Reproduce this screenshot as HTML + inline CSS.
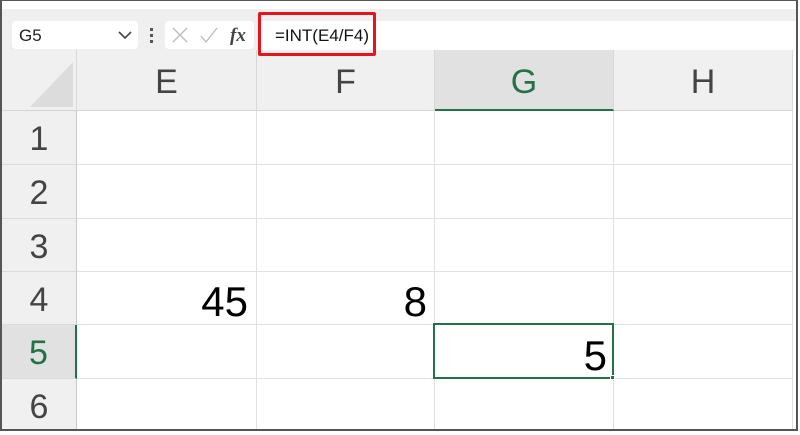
<!DOCTYPE html>
<html><head><style>
*{margin:0;padding:0;box-sizing:border-box}
body{width:800px;height:431px;overflow:hidden;background:#fff;position:relative;font-family:"Liberation Sans",sans-serif}
.a{position:absolute}
.hd{position:absolute;top:50px;height:61px;background:#f0f0f0;border-bottom:1px solid #d4d4d4;border-right:1px solid #d8d8d8;color:#444;font-size:34px;text-align:center;line-height:64px}
.rh{position:absolute;left:2px;width:75px;background:#f0f0f0;border-bottom:1px solid #dcdcdc;border-right:1px solid #c8c8c8;color:#444;font-size:34px;text-align:center;line-height:56px}
.vl{position:absolute;top:111px;width:1px;height:318px;background:#e1e1e1}
.hl{position:absolute;left:77px;width:715px;height:1px;background:#e1e1e1}
.num{position:absolute;font-size:42px;color:#000;text-align:right}
</style></head><body>
<div class="a" style="left:0;top:0;width:800px;height:10px;background:#fff"></div>
<div class="a" style="left:1px;top:9px;width:796px;height:41px;background:#efefef"></div>
<div class="a" style="left:258px;top:21px;width:539px;height:29px;background:#fff"></div>
<div class="a" style="left:12px;top:21px;width:126px;height:28px;background:#fff;border-radius:4px"></div>
<div class="a" style="left:19px;top:26px;font-size:17px;color:#222">G5</div>
<svg class="a" style="left:118px;top:30px" width="14" height="10"><path d="M1 2 L7 8 L13 2" stroke="#444" stroke-width="1.6" fill="none"/></svg>
<div class="a" style="left:150px;top:28px;width:3px;height:3px;background:#555"></div>
<div class="a" style="left:150px;top:34px;width:3px;height:3px;background:#555"></div>
<div class="a" style="left:150px;top:40px;width:3px;height:3px;background:#555"></div>
<div class="a" style="left:165px;top:21px;width:89px;height:28px;background:#fff;border-radius:4px"></div>
<svg class="a" style="left:170px;top:25px" width="80" height="22"><path d="M3 3 L17 17 M17 3 L3 17" stroke="#bbb" stroke-width="1.3"/><path d="M31 11 L36 17 L47 3" stroke="#bbb" stroke-width="1.3" fill="none"/><text x="60" y="16" font-family="Liberation Serif" font-style="italic" font-weight="bold" font-size="19" fill="#444">fx</text></svg>
<div class="a" style="left:275px;top:26px;font-size:17px;color:#111">=INT(E4/F4)</div>
<div class="a" style="left:2px;top:50px;width:75px;height:61px;background:#f0f0f0;border-right:1px solid #d8d8d8;border-bottom:1px solid #d4d4d4"></div>
<svg class="a" style="left:30px;top:62px" width="44" height="46"><path d="M43 0 L43 45 L0 45 Z" fill="#dcdcdc"/></svg>
<div class="hd" style="left:77px;width:180px">E</div>
<div class="hd" style="left:257px;width:178px">F</div>
<div class="hd" style="left:435px;width:179px;background:#e1e1e1;color:#217346;border-bottom:2px solid #217346">G</div>
<div class="hd" style="left:614px;width:179px">H</div>
<div class="rh" style="top:111px;height:54px">1</div>
<div class="rh" style="top:165px;height:54px">2</div>
<div class="rh" style="top:219px;height:53px">3</div>
<div class="rh" style="top:272px;height:53px">4</div>
<div class="rh" style="top:325px;height:54px;background:#e1e1e1;color:#217346;border-right:2px solid #217346">5</div>
<div class="rh" style="top:379px;height:50px;border-bottom:none">6</div>
<div class="vl" style="left:256px"></div>
<div class="vl" style="left:434px"></div>
<div class="vl" style="left:613px"></div>
<div class="vl" style="left:792px"></div>
<div class="hl" style="top:164px"></div>
<div class="hl" style="top:218px"></div>
<div class="hl" style="top:271px"></div>
<div class="hl" style="top:324px"></div>
<div class="hl" style="top:378px"></div>
<div class="num" style="left:150px;width:98px;top:278px">45</div>
<div class="num" style="left:330px;width:97px;top:278px">8</div>
<div class="a" style="left:433px;top:323px;width:181px;height:56px;border:2px solid #217346"></div>
<div class="a" style="left:610px;top:375px;width:5px;height:5px;background:#217346;border:1px solid #fff"></div>
<div class="num" style="left:500px;width:107px;top:332px">5</div>
<div class="a" style="left:258px;top:12px;width:118px;height:44px;border:3px solid #e8141c;border-radius:2px;z-index:10"></div>
<div class="a" style="left:0;top:0;width:2px;height:431px;background:#555;z-index:11"></div>
<div class="a" style="left:796px;top:0;width:2px;height:431px;background:#555;z-index:11"></div>
<div class="a" style="left:0;top:429px;width:798px;height:2px;background:#555;z-index:11"></div>
<div class="a" style="left:0;top:0;width:798px;height:1px;background:#555;z-index:11"></div>
</body></html>
